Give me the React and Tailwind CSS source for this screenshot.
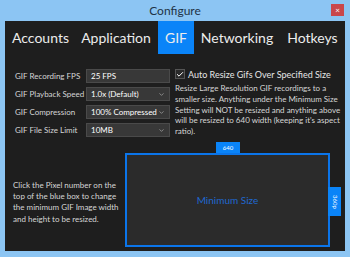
import React from "react";
import { ChevronDown, Check } from "lucide-react";

const font = { fontFamily: 'Lato, "Open Sans", sans-serif' };

const tabs = [
    { name: "Accounts", w: "w-[71px]" },
    { name: "Application", w: "w-[80px]" },
    { name: "GIF", w: "w-[36px] ml-[2px]" },
    { name: "Networking", w: "w-[86px]" },
    { name: "Hotkeys", w: "w-[65px]" },
];

const fields = [
    { label: "GIF Recording FPS", value: "25 FPS", select: false },
    { label: "GIF Playback Speed", value: "1.0x (Default)", select: true },
    { label: "GIF Compression", value: "100% Compressed", select: true },
    { label: "GIF File Size Limit", value: "10MB", select: true },
];

const App = () => {
    return (
        <div className="w-[350px] h-[257px] bg-[#8cc5f3] flex flex-col overflow-hidden" style={font}>
            {/* Title bar */}
            <div className="h-[21px] relative flex items-center justify-center">
                <span className="text-[12px] text-[#1f3346] leading-none">Configure</span>
                <div className="absolute right-[6px] top-[4px] w-[13px] h-[12px] bg-[#c9474b] flex items-center justify-center text-white text-[8px] leading-none">
                    ×
                </div>
            </div>

            {/* Panel */}
            <div className="mx-[5px] h-[230px] bg-[#1e1e1e] flex flex-col">
                {/* Tabs */}
                <div className="h-[33px] flex items-stretch">
                    {tabs.map((t) => (
                        <div
                            key={t.name}
                            className={
                                "flex items-center justify-center text-[14px] text-[#ececec] whitespace-nowrap " +
                                t.w +
                                (t.name === "GIF" ? " bg-[#0a84f8]" : "")
                            }
                        >
                            {t.name}
                        </div>
                    ))}
                </div>

                {/* Top section */}
                <div className="h-[88px] pt-[15px] flex">
                    <div className="w-[165px] pl-[10px] flex flex-col gap-[4px]">
                        {fields.map((f) => (
                            <div key={f.label} className="flex items-center h-[14px]">
                                <span className="w-[71px] text-[8px] text-[#d6d6d6] whitespace-nowrap leading-none">
                                    {f.label}
                                </span>
                                <div className="w-[84px] h-[14px] bg-[#383838] border border-[#4a4a4a] flex items-center pl-[4px] pr-[4px]">
                                    <span className="text-[8px] text-white leading-none flex-1 whitespace-nowrap">
                                        {f.value}
                                    </span>
                                    {f.select && <ChevronDown size={7} className="text-[#bdbdbd]" strokeWidth={2} />}
                                </div>
                            </div>
                        ))}
                    </div>
                    <div className="flex-1 pl-[5px] flex flex-col">
                        <div className="flex items-center h-[12px] mt-[-1px]">
                            <div className="w-[10px] h-[10px] bg-[#2a2a2a] border border-[#555] flex items-center justify-center">
                                <Check size={9} strokeWidth={3} className="text-white" />
                            </div>
                            <span className="ml-[3px] text-[9px] text-[#e6e6e6] whitespace-nowrap leading-none">
                                Auto Resize Gifs Over Specified Size
                            </span>
                        </div>
                        <p className="mt-[3px] w-[168px] text-[8px] leading-[10.8px] text-[#d6d6d6]">
                            Resize Large Resolution GIF recordings to a smaller size. Anything under the Minimum Size
                            Setting will NOT be resized and anything above will be resized to 640 width (keeping it's
                            aspect ratio).
                        </p>
                    </div>
                </div>

                {/* Bottom section */}
                <div className="flex items-end flex-1 pb-[4px]">
                    <div className="w-[120px] pl-[8px] pb-[22px] text-[8px] leading-[11.3px] text-[#d6d6d6]">
                        Click the Pixel number on the top of the blue box to change the minimum GIF Image width and
                        height to be resized.
                    </div>
                    <div className="relative w-[205px] h-[94px] border-2 border-[#0b75ea] bg-[#2b2b2b] flex items-center justify-center">
                        <span className="text-[10px] text-[#1f68d0]">Minimum Size</span>
                        <div className="absolute top-[-13px] left-[89px] w-[24px] h-[11px] bg-[#0a84f8] flex items-center justify-center text-[6px] text-white leading-none">
                            640
                        </div>
                        <div className="absolute left-full top-[32px] w-[13px] h-[29px] bg-[#0a84f8] flex items-center justify-center">
                            <span className="text-[6px] text-white leading-none [writing-mode:vertical-rl]">360p</span>
                        </div>
                    </div>
                </div>
            </div>
        </div>
    );
};

export default App;
